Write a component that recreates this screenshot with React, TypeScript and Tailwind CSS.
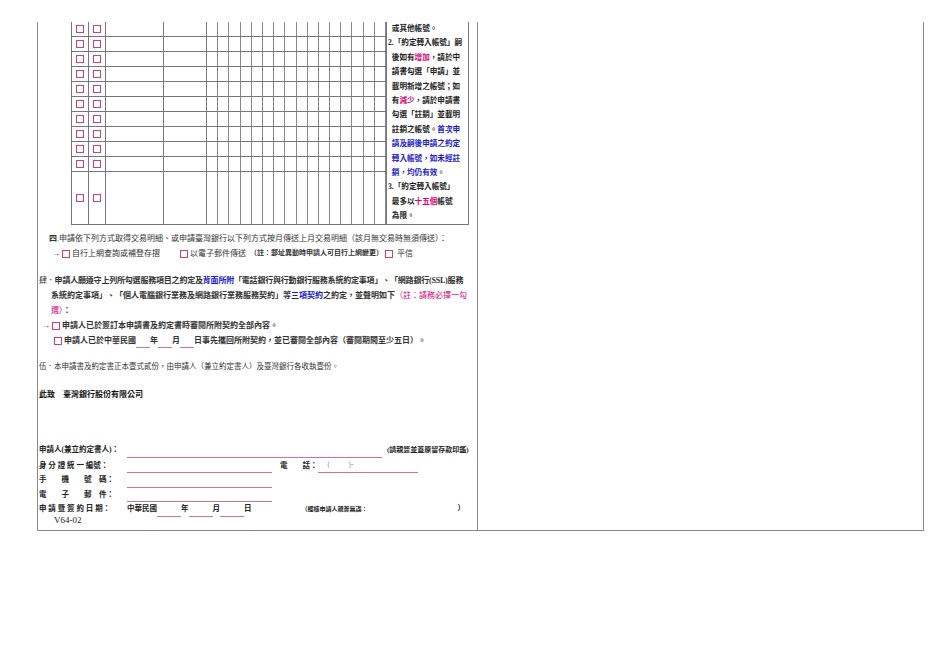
import React from "react";

const Box = () => (
  <span className="inline-block w-[8px] h-[8px] border border-[#d0407f] align-middle shrink-0" />
);

const note: React.ReactNode[] = [
  <>&nbsp;&nbsp;或其他帳號。</>,
  <>2.「約定轉入帳號」嗣</>,
  <>&nbsp;&nbsp;後如有<span className="text-[#e0007a]">增加</span>，請於中</>,
  <>&nbsp;&nbsp;請書勾選「申請」並</>,
  <>&nbsp;&nbsp;載明新增之帳號；如</>,
  <>&nbsp;&nbsp;有<span className="text-[#e0007a]">減少</span>，請於申請書</>,
  <>&nbsp;&nbsp;勾選「註銷」並載明</>,
  <>&nbsp;&nbsp;註銷之帳號。<span className="text-[#1a1acc]">首次申</span></>,
  <span className="text-[#1a1acc]">&nbsp;&nbsp;請及嗣後申請之約定</span>,
  <span className="text-[#1a1acc]">&nbsp;&nbsp;轉入帳號，如未經註</span>,
  <span className="text-[#1a1acc]">&nbsp;&nbsp;銷，均仍有效。</span>,
  <>3.「約定轉入帳號」</>,
  <>&nbsp;&nbsp;最多以<span className="text-[#e0007a]">十五個</span>帳號</>,
  <>&nbsp;&nbsp;為限。</>,
];

function Row({ h }: { h: string }) {
  return (
    <div className={`flex ${h} border-b border-[#777]`}>
      <div className="w-[17px] border-r border-[#777] flex items-center justify-center"><Box /></div>
      <div className="w-[17px] border-r border-[#777] flex items-center justify-center"><Box /></div>
      <div className="w-[58px] border-r border-[#777]" />
      <div className="w-[43px] border-r border-[#777]" />
      {Array.from({ length: 16 }).map((_, i) => (
        <div key={i} className="w-[11.2px] border-r border-[#888]" />
      ))}
    </div>
  );
}

const line = "inline-block border-b border-[#d070a8] align-bottom";

export default function App() {
  return (
    <div className="w-[950px] h-[672px] bg-white pt-[22px] pl-[37px] text-[8px] text-[#333]" style={{ fontFamily: '"Liberation Serif", "Noto Sans CJK TC", serif' }}>
      <div className="flex w-[887px] h-[509px] border border-[#888] border-t-0">
        <div className="w-[440px] border-r border-[#888] flex flex-col">
          <div className="flex ml-[33px] w-[398px] border-l border-r border-[#777]">
            <div className="flex flex-col border-r border-[#777]">
              {Array.from({ length: 10 }).map((_, i) => (
                <Row key={i} h="h-[15px]" />
              ))}
              <Row h="h-[53px]" />
            </div>
            <div className="flex-1 pl-[1px] border-b border-[#777] font-bold text-[7.6px] leading-[14.4px] text-[#222] whitespace-nowrap overflow-hidden">
              {note.map((n, i) => <div key={i}>{n}</div>)}
            </div>
          </div>

          <div className="pl-[11px] mt-[6px] leading-[15px] whitespace-nowrap">
            <div><b>四</b>.申請依下列方式取得交易明細、或申請臺灣銀行以下列方式按月傳送上月交易明細（該月無交易時無須傳送）：</div>
            <div className="pl-[3px] flex items-center gap-[2px]">
              <span>→</span><Box /><span className="mr-[18px]">自行上網查詢或補登存摺</span>
              <Box /><span>以電子郵件傳送</span><b className="ml-[2px] text-[7px]">（註：郵址異動時申請人可自行上網變更）</b><Box /><span className="ml-[2px]">平信</span>
            </div>
          </div>

          <div className="mt-[12px] pl-[1px] leading-[15px] font-bold whitespace-nowrap">
            <div className="tracking-[-0.2px]"><span className="font-normal">肆．</span>申請人願遵守上列所勾選服務項目之約定及<span className="text-[#1a1acc]">背面所附</span>「電話銀行與行動銀行服務系統約定事項」、「網路銀行(SSL)服務</div>
            <div className="pl-[12px]">系統約定事項」、「個人電腦銀行業務及網路銀行業務服務契約」等<span className="text-[#1a1acc]">三項契約</span>之約定，並聲明如下<span className="text-[#e0007a] font-normal">（註：請務必擇一勾</span></div>
            <div className="pl-[12px]"><span className="text-[#e0007a] font-normal">選）</span>：</div>
            <div className="pl-[3px] flex items-center gap-[2px]"><span>→</span><Box /><span>申請人已於簽訂本申請書及約定書時審閱所附契約全部內容。</span></div>
            <div className="pl-[15px] flex items-center gap-[2px]"><Box /><span>申請人已於中華民國<span className={`${line} w-[14px] border-[#555]`} />年<span className={`${line} w-[14px] border-[#555]`} />月<span className={`${line} w-[14px] border-[#555]`} />日事先攜回所附契約，並已審閱全部內容（審閱期間至少五日）。</span></div>
          </div>

          <div className="mt-[13px] pl-[1px] text-[7.5px] whitespace-nowrap">伍．本申請書及約定書正本壹式貳份，由申請人（兼立約定書人）及臺灣銀行各收執壹份。</div>
          <div className="mt-[17px] pl-[1px] font-bold text-[8px] text-[#111]">此致　臺灣銀行股份有限公司</div>

          <div className="mt-[42px] pl-[1px] font-bold text-[7.5px] leading-[14.5px] text-[#222] whitespace-nowrap">
            <div className="flex items-end"><span className="w-[88px]">申請人(兼立約定書人)：</span><span className={`${line} w-[255px] mr-[5px]`} /><span className="text-[7px]">(請親簽並蓋原留存款印鑑)</span></div>
            <div className="flex items-end"><span className="w-[88px]">身 分 證 統 一 編號：</span><span className={`${line} w-[145px] mr-[8px]`} /><span className="w-[38px]">電　　話：</span><span className={`${line} w-[100px] text-[#d070a8] font-normal`}>&nbsp;&nbsp;&nbsp;&nbsp;&nbsp;(&nbsp;&nbsp;&nbsp;&nbsp;&nbsp;&nbsp;&nbsp;&nbsp;&nbsp;&nbsp;)-</span></div>
            <div className="flex items-end"><span className="w-[88px]">手　　機　　號　碼：</span><span className={`${line} w-[145px]`} /></div>
            <div className="flex items-end"><span className="w-[88px]">電　　子　　郵　件：</span><span className={`${line} w-[145px]`} /></div>
            <div className="flex items-end"><span className="w-[88px]">申 請 暨 簽 約 日 期：</span>中華民國<span className={`${line} w-[24px]`} />年<span className={`${line} w-[24px]`} />月<span className={`${line} w-[24px]`} />日<span className="ml-[50px] text-[6px]">（經核申請人親簽無誤：</span><span className="ml-[90px]">）</span></div>
            <div className="pl-[15px] leading-[7px] font-normal text-[9px]">V64-02</div>
          </div>
        </div>
        <div className="flex-1" />
      </div>
    </div>
  );
}
